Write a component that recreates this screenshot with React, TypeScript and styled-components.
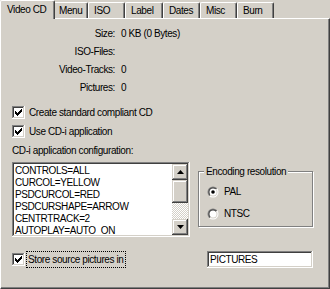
import { Fragment } from 'react';
import styled, { createGlobalStyle } from 'styled-components';

const GlobalStyle = createGlobalStyle`
  html, body {
    margin: 0;
    padding: 0;
    background: #d4d0c8;
  }
  body {
    font-family: 'Liberation Sans', Arial, sans-serif;
    font-size: 10px;
    letter-spacing: -0.4px;
    color: #000;
  }
`;

const Dialog = styled.div`
  width: 330px;
  height: 289px;
  background: #d4d0c8;
  display: flex;
  flex-direction: column;
  overflow: hidden;
`;

const TabStrip = styled.div`
  display: flex;
  align-items: flex-end;
  height: 18px;
  flex-shrink: 0;
`;

const Tab = styled.div<{ $active?: boolean; $width: number }>`
  position: relative;
  z-index: ${(p) => (p.$active ? 2 : 1)};
  box-sizing: border-box;
  width: ${(p) => p.$width}px;
  height: ${(p) => (p.$active ? 19 : 16)}px;
  margin-bottom: ${(p) => (p.$active ? -1 : 0)}px;
  margin-right: ${(p) => (p.$active ? -2 : 0)}px;
  padding-left: ${(p) => (p.$active ? 6 : 5)}px;
  padding-bottom: ${(p) => (p.$active ? 2 : 0)}px;
  display: flex;
  align-items: center;
  background: #d4d0c8;
  border-top: 1px solid #fff;
  border-left: 1px solid #fff;
  border-right: 1px solid #404040;
  border-top-left-radius: 2px;
  border-top-right-radius: 2px;
  box-shadow: inset -1px 0 #808080;
  white-space: nowrap;
`;

const Panel = styled.div`
  flex: 1;
  box-sizing: border-box;
  border-top: 1px solid #fff;
  border-left: 1px solid #fff;
  border-right: 1px solid #404040;
  border-bottom: 1px solid #404040;
  box-shadow: inset -1px -1px #808080;
  padding: 5px 16px 0 11px;
  display: flex;
  flex-direction: column;
`;

const InfoGrid = styled.div`
  display: grid;
  grid-template-columns: 103px 1fr;
  grid-auto-rows: 18px;
  column-gap: 6px;
  align-items: center;
`;

const InfoLabel = styled.span`
  text-align: right;
`;

const CheckRow = styled.label<{ $top?: number }>`
  display: flex;
  align-items: center;
  gap: 4px;
  height: 19px;
  margin-top: ${(p) => p.$top ?? 0}px;
  white-space: nowrap;
`;

const CheckBox = styled.span`
  box-sizing: border-box;
  width: 13px;
  height: 13px;
  flex-shrink: 0;
  background: #fff;
  box-shadow: inset -1px -1px #fff, inset 1px 1px #808080, inset -2px -2px #d4d0c8,
    inset 2px 2px #404040;
  display: flex;
  align-items: center;
  justify-content: center;
`;

const FocusText = styled.span`
  outline: 1px dotted #000;
  outline-offset: 0;
  padding: 2px 2px 2px 1px;
  margin-left: -2px;
`;

const SectionLabel = styled.div`
  margin-top: 3px;
  height: 14px;
  line-height: 14px;
  margin-bottom: 4px;
`;

const MiddleRow = styled.div`
  display: flex;
  gap: 8px;
  align-items: flex-start;
`;

const ListBox = styled.div`
  box-sizing: border-box;
  width: 178px;
  height: 75px;
  background: #fff;
  padding: 2px;
  display: flex;
  box-shadow: inset -1px -1px #fff, inset 1px 1px #808080, inset -2px -2px #d4d0c8,
    inset 2px 2px #404040;
`;

const ListLines = styled.div`
  flex: 1;
  padding: 1px 0 0 1px;
  line-height: 12px;
  white-space: nowrap;
  overflow: hidden;
`;

const ScrollBar = styled.div`
  width: 16px;
  display: flex;
  flex-direction: column;
`;

const ScrollButton = styled.div<{ $height?: number }>`
  box-sizing: border-box;
  height: ${(p) => p.$height ?? 16}px;
  background: #d4d0c8;
  box-shadow: inset -1px -1px #404040, inset 1px 1px #d4d0c8, inset -2px -2px #808080,
    inset 2px 2px #fff;
  display: flex;
  align-items: center;
  justify-content: center;
`;

const ScrollTrack = styled.div`
  flex: 1;
  background: repeating-conic-gradient(#fff 0 25%, #d4d0c8 0 50%) 0 0 / 2px 2px;
`;

const GroupBox = styled.fieldset`
  flex: 1;
  box-sizing: border-box;
  margin: 3px 0 0;
  height: 62px;
  padding: 4px 8px 0;
  border: 1px solid #808080;
  box-shadow: 1px 1px 0 #fff, inset 1px 1px 0 #fff;
  display: flex;
  flex-direction: column;
  gap: 3px;
`;

const GroupTitle = styled.legend`
  margin-left: -3px;
  padding: 0 2px;
  background: #d4d0c8;
  line-height: 13px;
  white-space: nowrap;
`;

const RadioRow = styled.label`
  display: flex;
  align-items: center;
  gap: 5px;
  height: 19px;
`;

const BottomRow = styled.div`
  display: flex;
  align-items: center;
  justify-content: space-between;
  margin-top: 14px;
  height: 17px;
`;

const EditBox = styled.div`
  box-sizing: border-box;
  width: 106px;
  height: 17px;
  background: #fff;
  padding: 2px 3px 0;
  line-height: 13px;
  box-shadow: inset -1px -1px #fff, inset 1px 1px #808080, inset -2px -2px #d4d0c8,
    inset 2px 2px #404040;
`;

function Check() {
  return (
    <CheckBox>
      <svg width="7" height="7" viewBox="0 0 7 7">
        <path d="M0 2h1v1h1v1h1v-1h1v-1h1v-1h1v-1h1v3h-1v1h-1v1h-1v1h-1v1h-1v-1h-1v-1h-1z" fill="#000" />
      </svg>
    </CheckBox>
  );
}

function Radio({ checked }: { checked?: boolean }) {
  return (
    <svg width="12" height="12" viewBox="0 0 12 12">
      <defs>
        <linearGradient id="radioOuter" x1="0" y1="0" x2="1" y2="1">
          <stop offset="0.5" stopColor="#808080" />
          <stop offset="0.5" stopColor="#fff" />
        </linearGradient>
        <linearGradient id="radioInner" x1="0" y1="0" x2="1" y2="1">
          <stop offset="0.5" stopColor="#404040" />
          <stop offset="0.5" stopColor="#d4d0c8" />
        </linearGradient>
      </defs>
      <circle cx="6" cy="6" r="5.5" fill="url(#radioOuter)" />
      <circle cx="6" cy="6" r="4.5" fill="url(#radioInner)" />
      <circle cx="6" cy="6" r="3.5" fill="#fff" />
      {checked && <circle cx="6" cy="6" r="1.8" fill="#000" />}
    </svg>
  );
}

function Arrow({ down }: { down?: boolean }) {
  return (
    <svg width="7" height="4" viewBox="0 0 7 4">
      <path d={down ? 'M0 0h7L3.5 4z' : 'M0 4h7L3.5 0z'} fill="#000" />
    </svg>
  );
}

const tabs = [
  { name: 'Video CD', width: 55 },
  { name: 'Menu', width: 35 },
  { name: 'ISO', width: 37 },
  { name: 'Label', width: 38 },
  { name: 'Dates', width: 37 },
  { name: 'Misc', width: 37 },
  { name: 'Burn', width: 37 },
];

const info = [
  ['Size:', '0 KB (0 Bytes)'],
  ['ISO-Files:', ''],
  ['Video-Tracks:', '0'],
  ['Pictures:', '0'],
];

const config = [
  'CONTROLS=ALL',
  'CURCOL=YELLOW',
  'PSDCURCOL=RED',
  'PSDCURSHAPE=ARROW',
  'CENTRTRACK=2',
  'AUTOPLAY=AUTO_ON',
];

export default function App() {
  return (
    <>
      <GlobalStyle />
      <Dialog>
        <TabStrip>
          {tabs.map((t, i) => (
            <Tab key={t.name} $active={i === 0} $width={t.width}>
              {t.name}
            </Tab>
          ))}
        </TabStrip>
        <Panel>
          <InfoGrid>
            {info.map(([label, value]) => (
              <Fragment key={label}>
                <InfoLabel>{label}</InfoLabel>
                <span>{value}</span>
              </Fragment>
            ))}
          </InfoGrid>
          <CheckRow $top={7}>
            <Check />
            Create standard compliant CD
          </CheckRow>
          <CheckRow>
            <Check />
            Use CD-i application
          </CheckRow>
          <SectionLabel>CD-i application configuration:</SectionLabel>
          <MiddleRow>
            <ListBox>
              <ListLines>
                {config.map((line) => (
                  <div key={line}>{line}</div>
                ))}
              </ListLines>
              <ScrollBar>
                <ScrollButton>
                  <Arrow />
                </ScrollButton>
                <ScrollButton $height={23} />
                <ScrollTrack />
                <ScrollButton>
                  <Arrow down />
                </ScrollButton>
              </ScrollBar>
            </ListBox>
            <GroupBox>
              <GroupTitle>Encoding resolution</GroupTitle>
              <RadioRow>
                <Radio checked />
                PAL
              </RadioRow>
              <RadioRow>
                <Radio />
                NTSC
              </RadioRow>
            </GroupBox>
          </MiddleRow>
          <BottomRow>
            <CheckRow>
              <Check />
              <FocusText>Store source pictures in</FocusText>
            </CheckRow>
            <EditBox>PICTURES</EditBox>
          </BottomRow>
        </Panel>
      </Dialog>
    </>
  );
}
